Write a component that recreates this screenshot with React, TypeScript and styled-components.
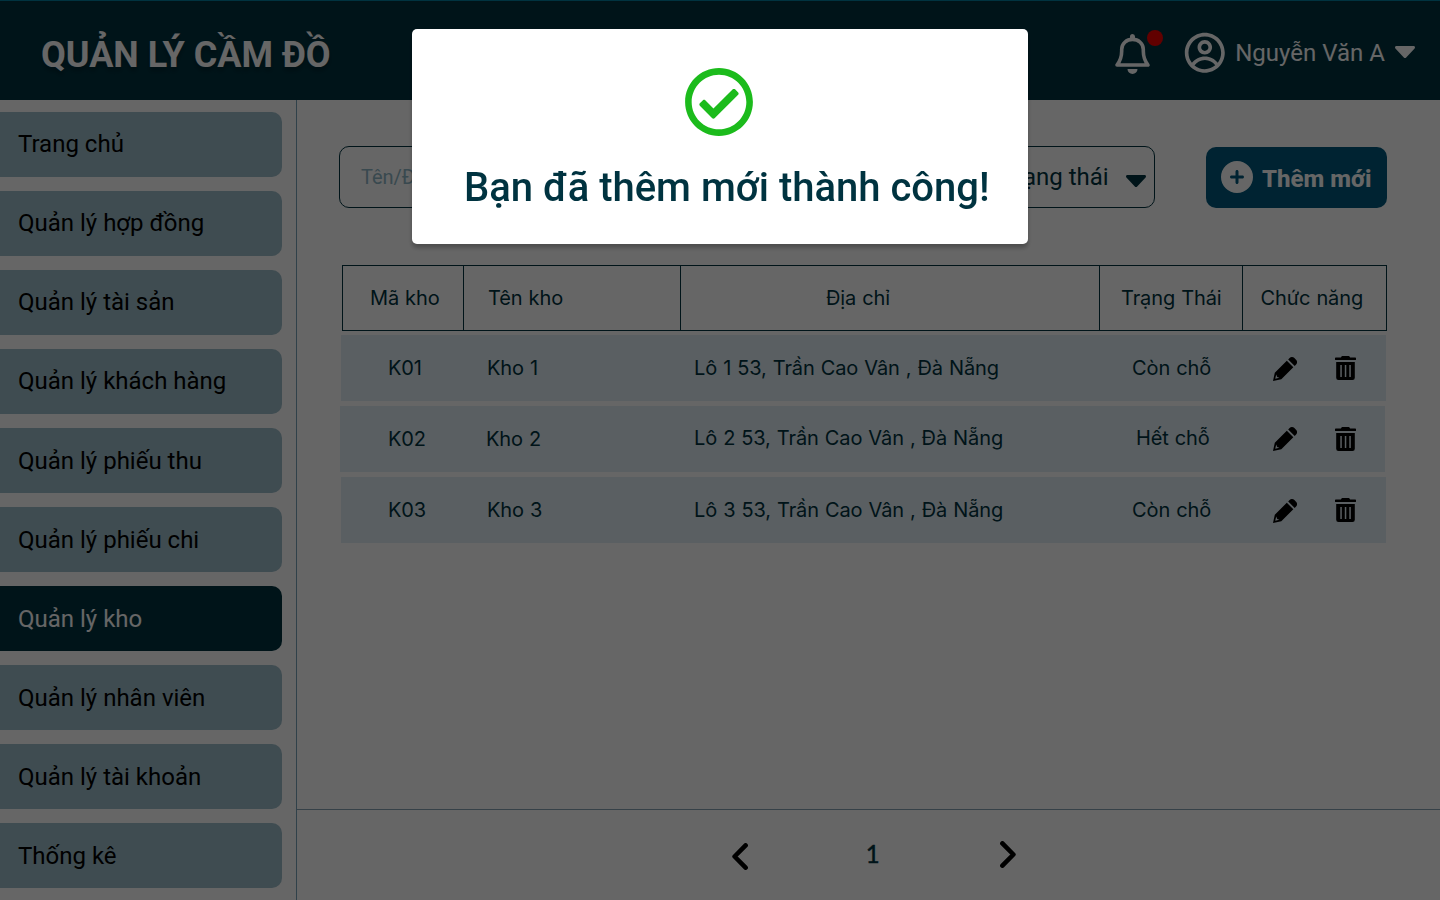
import React from 'react';
import styled, { createGlobalStyle } from 'styled-components';
import { CgProfile } from 'react-icons/cg';
import { FaRegCheckCircle } from 'react-icons/fa';
import { FaCirclePlus } from 'react-icons/fa6';

const color = {
  navy: '#003340',
  item: '#9ebecb',
  row: '#e1edf4',
  button: '#00597d',
  white: '#ffffff',
  green: '#1cbb1c',
};

const GlobalStyle = createGlobalStyle`
  *, *::before, *::after { box-sizing: border-box; }
  body {
    margin: 0;
    overflow: hidden;
    font-family: Roboto, "Liberation Sans", sans-serif;
    background: ${color.white};
  }
`;

const Page = styled.div`
  display: flex;
  flex-direction: column;
  width: 1440px;
  height: 900px;
  overflow: hidden;
`;

const Header = styled.header`
  display: flex;
  align-items: center;
  justify-content: space-between;
  flex: none;
  height: 100px;
  padding: 6px 25px 0 41px;
  background: ${color.navy};
  color: ${color.white};
`;

const Brand = styled.h1`
  margin: 0;
  padding-top: 3px;
  font-size: 36px;
  line-height: 42px;
  font-weight: 700;
  text-shadow: 0 4px 4px rgba(0, 0, 0, 0.25);
`;

const Account = styled.div`
  display: flex;
  align-items: center;
  font-size: 24px;
  line-height: 28px;
`;

const BellButton = styled.div`
  position: relative;
  width: 40px;
  height: 40px;
  margin: 2px 31px 0 0;
  svg { display: block; }
`;

const Dot = styled.span`
  position: absolute;
  top: -4px;
  right: -11px;
  width: 16px;
  height: 16px;
  border-radius: 50%;
  background: #f30000;
`;

const UserName = styled.span`
  margin: 0 10.2px 0 8.6px;
`;

const CaretSvg = styled.svg<{ $drop?: number }>`
  display: block;
  flex: none;
  width: 20px;
  height: 12px;
  margin-top: ${p => p.$drop ?? 0}px;
`;

const Body = styled.div`
  display: flex;
  flex: 1;
  min-height: 0;
`;

const Sidebar = styled.nav`
  display: flex;
  flex-direction: column;
  gap: 14px;
  flex: none;
  width: 297px;
  padding-top: 12px;
  border-right: 1px solid #78a3b8;
`;

const NavItem = styled.a<{ $active?: boolean }>`
  display: flex;
  align-items: center;
  flex: none;
  width: 282px;
  height: 65px;
  padding-left: 18px;
  border-radius: 0 10px 10px 0;
  font-size: 24px;
  line-height: 28px;
  background: ${p => (p.$active ? color.navy : color.item)};
  color: ${p => (p.$active ? color.white : '#000')};
  &:nth-child(-n + 4) { padding-bottom: 2px; }
`;

const Main = styled.main`
  display: flex;
  flex-direction: column;
  flex: 1;
  min-width: 0;
`;

const Content = styled.section`
  flex: 1;
  padding: 46px 53px 0 42px;
`;

const Toolbar = styled.div`
  display: flex;
  height: 62px;
`;

const SearchInput = styled.div`
  display: flex;
  align-items: center;
  width: 420px;
  padding-left: 21px;
  border: 1px solid ${color.navy};
  border-radius: 10px;
  font-size: 20px;
  color: #8fb6c6;
`;

const StatusSelect = styled.div`
  display: flex;
  align-items: center;
  justify-content: flex-end;
  gap: 17.4px;
  width: 200px;
  margin-left: auto;
  padding-right: 8px;
  border: 1px solid ${color.navy};
  border-radius: 10px;
  font-size: 24px;
  color: ${color.navy};
`;

const AddButton = styled.button`
  display: flex;
  align-items: center;
  gap: 9px;
  width: 181px;
  height: 61px;
  margin: 1px 0 0 51px;
  padding: 0 0 0 15px;
  border: 0;
  border-radius: 10px;
  background: ${color.button};
  color: ${color.white};
  font: 800 24px/28px Roboto, sans-serif;
  svg { margin-top: -2px; flex: none; }
  span { margin-top: 2px; white-space: nowrap; }
`;

const Table = styled.div`
  margin: 57px 0 0 3px;
  font: 400 20px/24px Inter, sans-serif;
  letter-spacing: -0.1px;
  word-spacing: 0.5px;
  color: ${color.navy};
`;

const columns = '120px 217px 419px 143px 1fr';

const HeadRow = styled.div`
  display: grid;
  grid-template-columns: ${columns};
  width: 1045px;
  height: 66px;
  margin-bottom: 4px;
  border: 1px solid ${color.navy};
`;

const HeadCell = styled.div<{ $pad: number }>`
  display: flex;
  align-items: center;
  padding-left: ${p => p.$pad}px;
  white-space: nowrap;
  & + & { border-left: 1px solid ${color.navy}; }
`;

const Row = styled.div<{ $shift: number }>`
  display: grid;
  grid-template-columns: ${columns};
  width: 1045px;
  height: 66px;
  margin: 0 0 5px ${p => p.$shift}px;
  background: ${color.row};
`;

const Cell = styled.div<{ $pad: number; $raise?: number }>`
  display: flex;
  align-items: center;
  padding: 0 0 ${p => p.$raise ?? 0}px ${p => p.$pad}px;
  white-space: nowrap;
`;

const Actions = styled.div<{ $pad: number; $drop: number }>`
  display: flex;
  align-items: center;
  gap: 38px;
  padding-left: ${p => p.$pad}px;
  color: #000;
  svg:first-child { margin-top: ${p => p.$drop}px; }
`;

const Pagination = styled.footer`
  display: flex;
  align-items: center;
  flex: none;
  height: 91px;
  padding-left: 435px;
  border-top: 1px solid #87a3b3;
`;

const PageNumber = styled.span`
  width: 20px;
  margin: -2px 117.4px 0 114.6px;
  font: 500 24px/28px Lato, sans-serif;
  -webkit-text-stroke: 0.3px ${color.navy};
  color: ${color.navy};
  text-align: center;
`;

const ChevronSvg = styled.svg<{ $drop: number; $flip?: boolean }>`
  flex: none;
  width: 16px;
  height: 27px;
  margin-top: ${p => p.$drop}px;
  transform: ${p => (p.$flip ? 'scaleX(-1)' : 'none')};
`;

const Overlay = styled.div`
  position: fixed;
  inset: 1px 0 0;
  display: flex;
  align-items: flex-start;
  justify-content: center;
  padding-top: 28px;
  background: rgba(0, 0, 0, 0.6);
`;

const Dialog = styled.div`
  display: flex;
  flex-direction: column;
  align-items: center;
  width: 616px;
  height: 215px;
  padding-top: 38px;
  border-radius: 5px;
  background: ${color.white};
  box-shadow: 0 4px 4px rgba(0, 0, 0, 0.25);
  svg { margin-right: 2px; }
`;

const DialogText = styled.p`
  margin: 27px 0 0 13.6px;
  font-size: 40px;
  line-height: 47px;
  font-weight: 500;
  white-space: nowrap;
  color: ${color.navy};
`;

const Caret = ({ drop }: { drop?: number }) => (
  <CaretSvg $drop={drop} viewBox="11.3 192 297.4 168" preserveAspectRatio="none">
    <path
      fill="currentColor"
      d="M31.3 192h257.3c17.8 0 26.7 21.5 14.1 34.1L174.1 354.8c-7.8 7.8-20.5 7.8-28.3 0L17.2 226.1C4.6 213.5 13.5 192 31.3 192z"
    />
  </CaretSvg>
);

const BellIcon = () => (
  <svg width="40" height="40" viewBox="0 0 40 40">
    <path
      fill="none"
      stroke="currentColor"
      strokeWidth="3.6"
      strokeLinejoin="round"
      d="M5 31C8.2 27 9.7 23 9.7 17v-1.5C9.7 9.6 14.5 5.4 20.5 5.4S31.3 9.6 31.3 15.5V17c0 6 1.5 10 4.7 14z"
    />
    <path fill="currentColor" d="M18 5V2.5a2.5 2.5 0 0 1 5 0V5zM15.5 35h10a5 5 0 0 1-10 0z" />
  </svg>
);

const PencilIcon = () => (
  <svg width="24" height="24" viewBox="0 0 24 24">
    <path
      fill="currentColor"
      fillRule="evenodd"
      d="M13.8 3.8l6.5 6.5L8.3 22.2 0 24l1.8-8.3zM3.2 17.6l-1 4.2 4.2-1-2.2-.9z"
    />
    <path
      fill="currentColor"
      d="M15.2 2.4l1.4-1.4c1.4-1.4 3.4-1.3 4.8.1l1.6 1.6c1.4 1.4 1.4 3.4.1 4.8l-1.4 1.4z"
    />
  </svg>
);

const TrashIcon = () => (
  <svg width="21" height="24" viewBox="0 0 21 24">
    <path
      fill="currentColor"
      fillRule="evenodd"
      d="M6.9 0h7.2l1 1.5h5.2c.4 0 .7.3.7.7v1.2c0 .4-.3.7-.7.7H.7c-.4 0-.7-.3-.7-.7V2.2c0-.4.3-.7.7-.7h5.2zM1.2 6h18.6v15.7a2.3 2.3 0 0 1-2.3 2.3h-14a2.3 2.3 0 0 1-2.3-2.3zM5.3 9v12h1.5V9zM9.8 9v12h1.5V9zM14.3 9v12h1.5V9z"
    />
  </svg>
);

const Chevron = ({ drop, flip }: { drop: number; flip?: boolean }) => (
  <ChevronSvg $drop={drop} $flip={flip} viewBox="0 0 16 27">
    <path
      fill="none"
      stroke="#000"
      strokeWidth="4.6"
      strokeLinecap="round"
      strokeLinejoin="round"
      d="M13.6 2.4L2.6 13.5l11 11.1"
    />
  </ChevronSvg>
);

const menu = [
  'Trang chủ',
  'Quản lý hợp đồng',
  'Quản lý tài sản',
  'Quản lý khách hàng',
  'Quản lý phiếu thu',
  'Quản lý phiếu chi',
  'Quản lý kho',
  'Quản lý nhân viên',
  'Quản lý tài khoản',
  'Thống kê',
];

const warehouses = [
  {
    id: 'K01', name: 'Kho 1', address: 'Lô 1 53, Trần Cao Vân , Đà Nẵng', status: 'Còn chỗ',
    shift: -1, pads: [47, 26, 16, 35, 33], raise: 0, drop: 1,
  },
  {
    id: 'K02', name: 'Kho 2', address: 'Lô 2 53, Trần Cao Vân , Đà Nẵng', status: 'Hết chỗ',
    shift: -2, pads: [48, 26, 17, 40, 34], raise: 2, drop: 0,
  },
  {
    id: 'K03', name: 'Kho 3', address: 'Lô 3 53, Trần Cao Vân , Đà Nẵng', status: 'Còn chỗ',
    shift: -1, pads: [47, 26, 16, 35, 33], raise: 0, drop: 2,
  },
];

export default function App() {
  return (
    <>
      <GlobalStyle />
      <Page>
        <Header>
          <Brand>QUẢN LÝ CẦM ĐỒ</Brand>
          <Account>
            <BellButton>
              <BellIcon />
              <Dot />
            </BellButton>
            <CgProfile size={43.6} />
            <UserName>Nguyễn Văn A</UserName>
            <Caret drop={-2} />
          </Account>
        </Header>
        <Body>
          <Sidebar>
            {menu.map(label => (
              <NavItem key={label} $active={label === 'Quản lý kho'}>{label}</NavItem>
            ))}
          </Sidebar>
          <Main>
            <Content>
              <Toolbar>
                <SearchInput>Tên/Địa chỉ</SearchInput>
                <StatusSelect>
                  Trạng thái
                  <Caret drop={8} />
                </StatusSelect>
                <AddButton>
                  <FaCirclePlus size={32} />
                  <span>Thêm mới</span>
                </AddButton>
              </Toolbar>
              <Table>
                <HeadRow>
                  <HeadCell $pad={27}>Mã kho</HeadCell>
                  <HeadCell $pad={24}>Tên kho</HeadCell>
                  <HeadCell $pad={145}>Địa chỉ</HeadCell>
                  <HeadCell $pad={21}>Trạng Thái</HeadCell>
                  <HeadCell $pad={17.5}>Chức năng</HeadCell>
                </HeadRow>
                {warehouses.map(w => (
                  <Row key={w.id} $shift={w.shift}>
                    <Cell $pad={w.pads[0]}>{w.id}</Cell>
                    <Cell $pad={w.pads[1]}>{w.name}</Cell>
                    <Cell $pad={w.pads[2]} $raise={w.raise}>{w.address}</Cell>
                    <Cell $pad={w.pads[3]} $raise={w.raise}>{w.status}</Cell>
                    <Actions $pad={w.pads[4]} $drop={w.drop}>
                      <PencilIcon />
                      <TrashIcon />
                    </Actions>
                  </Row>
                ))}
              </Table>
            </Content>
            <Pagination>
              <Chevron drop={3} />
              <PageNumber>1</PageNumber>
              <Chevron drop={-1} flip />
            </Pagination>
          </Main>
        </Body>
      </Page>
      <Overlay>
        <Dialog>
          <FaRegCheckCircle size={70} color={color.green} />
          <DialogText>Bạn đã thêm mới thành công!</DialogText>
        </Dialog>
      </Overlay>
    </>
  );
}
